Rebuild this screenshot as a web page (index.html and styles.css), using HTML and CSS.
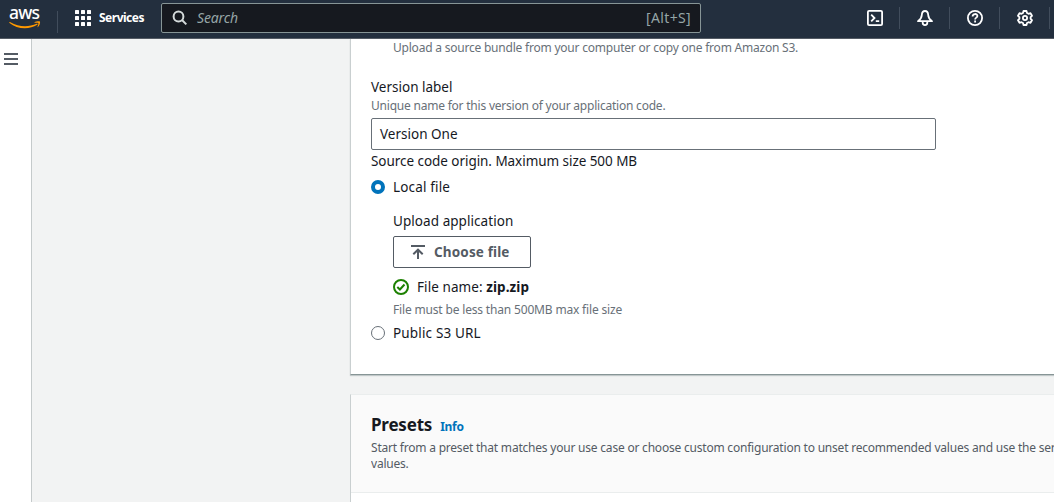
FILE: index.html
```html
<!DOCTYPE html>
<html lang="en">
<head>
<meta charset="utf-8">
<title>Configure environment</title>
<link rel="stylesheet" href="styles.css">
</head>
<body>
<header class="topbar">
  <div class="logo">
    <span class="logo-text">aws</span>
    <svg class="logo-smile" width="32" height="9" viewBox="0 0 32 9"><path d="M.3 1.2C.6.7 1 .9 1.400 1.200 9.600 6 19.500 6.300 27.700 2.700c.8-.3 1.300.4.5 1C20.500 8.700 8.300 8.400.5 1.900.3 1.700.2 1.400.3 1.200Z" fill="#f90"/><path d="M25.500 1.200c1.600-.9 4.900-1.100 5.400-.6.5.6-.1 4-1.900 5.500-.4.3-.7.1-.5-.4.5-1.200 1.200-3.200.8-3.700-.4-.6-2.400-.3-3.500-.2-.5 0-.6-.3-.3-.6Z" fill="#f90"/></svg>
  </div>
  <div class="services">
    <svg width="16" height="16" viewBox="0 0 16 16" fill="#fff"><rect width="4" height="4" rx=".6"/><rect x="6" width="4" height="4" rx=".6"/><rect x="12" width="4" height="4" rx=".6"/><rect y="6" width="4" height="4" rx=".6"/><rect x="6" y="6" width="4" height="4" rx=".6"/><rect x="12" y="6" width="4" height="4" rx=".6"/><rect y="12" width="4" height="4" rx=".6"/><rect x="6" y="12" width="4" height="4" rx=".6"/><rect x="12" y="12" width="4" height="4" rx=".6"/></svg>
    <span class="services-text">Services</span>
  </div>
  <div class="search">
    <svg width="16" height="16" viewBox="0 0 16 16" fill="none" stroke="#d5dbdb" stroke-width="2"><circle cx="6.500" cy="6.500" r="4.900"/><path d="m10 10 4.300 4.400"/></svg>
    <span class="search-text">Search</span>
    <span class="shortcut">[Alt+S]</span>
  </div>
  <nav class="tools">
    <span class="tool"><svg width="16" height="16" viewBox="0 0 16 16" fill="none" stroke="#fff" stroke-width="1.800"><rect x=".9" y=".9" width="14.200" height="14.200" rx="1.200"/><path d="m4.200 4.700 3.300 3.300-3.300 3.300M8.800 11.200h3.400"/></svg></span>
    <span class="tool"><svg width="16" height="16" viewBox="0 0 16 16" fill="none" stroke="#fff" stroke-width="1.800" stroke-linejoin="round"><path d="M8 1C5.700 1 4.900 2.900 4.800 5 4.700 7.300 3.500 9.500 1 11.200h14c-2.500-1.700-3.700-3.900-3.800-6.200C11.100 2.900 10.300 1 8 1Z"/><path d="M5.700 11.500v1.300c0 3 4.600 3 4.600 0v-1.300"/></svg></span>
    <span class="tool"><svg width="16" height="16" viewBox="0 0 16 16" fill="none" stroke="#fff" stroke-width="1.800"><circle cx="8" cy="8" r="7.100"/><path d="M5.600 6.400C5.600 3.300 10.400 3.300 10.400 6c0 1.700-2.300 1.600-2.300 3.500"/><path d="M7.200 11.500H9"/></svg></span>
    <span class="tool"><svg width="16" height="16" viewBox="0 0 16 16" fill="none" stroke="#fff" stroke-width="1.800" stroke-linejoin="round"><path d="M6.500 1h3l.5 2 1.500.8 2-.6 1.500 2.600L13.600 7.200v1.600l1.400 1.400-1.500 2.600-2-.6-1.500.8-.5 2h-3l-.5-2-1.500-.8-2 .6L1 10.200l1.400-1.400V7.200L1 5.800l1.500-2.600 2 .6L6 3Z"/><circle cx="8" cy="8" r="2.100"/></svg></span>
    <span class="tool"></span>
  </nav>
</header>
<div class="page">
  <aside class="rail">
    <svg width="14" height="12" viewBox="0 0 14 12" fill="#545b64"><path d="M0 0h14v2H0zM0 5h14v2H0zM0 10h14v2H0z"/></svg>
  </aside>
  <main class="content">
    <section class="card code-card">
      <p class="hint indent hint-bundle">Upload a source bundle from your computer or copy one from Amazon S3.</p>
      <div class="label">Version label</div>
      <p class="hint">Unique name for this version of your application code.</p>
      <div class="input"><span>Version One</span></div>
      <div class="label source">Source code origin. Maximum size 500 MB</div>
      <div class="option"><span class="radio radio-on"></span><span class="option-text">Local file</span></div>
      <div class="upload">
        <div class="label upload-label">Upload application</div>
        <div class="button">
          <svg width="14" height="14" viewBox="0 0 14 14" fill="none" stroke="#545b64" stroke-width="2"><path d="M0 1h14M7 14V5M2.300 9.200 7 4.700l4.700 4.500"/></svg>
          <span>Choose file</span>
        </div>
        <div class="file">
          <svg width="16" height="16" viewBox="0 0 16 16" fill="none" stroke="#1d8102" stroke-width="2"><circle cx="8" cy="8" r="7"/><path d="m4.300 8 2.600 2.500 4.600-5"/></svg>
          <span>File name: <b>zip.zip</b></span>
        </div>
        <p class="hint limit">File must be less than 500MB max file size</p>
      </div>
      <div class="option"><span class="radio"></span><span class="option-text">Public S3 URL</span></div>
    </section>
    <section class="card presets">
      <div class="presets-head">
        <div class="title-row"><h2 class="title">Presets</h2><a class="info">Info</a></div>
        <p class="presets-text">Start from a preset that matches your use case or choose custom configuration to unset recommended values and use the serv<br>values.</p>
      </div>
    </section>
  </main>
</div>
</body>
</html>
```
FILE: styles.css
```css
* { box-sizing: border-box; }
body {
  margin: 0;
  height: 502px;
  overflow: hidden;
  font-family: "Noto Sans", "Open Sans", sans-serif;
  font-size: 13.5px;
  line-height: 22px;
  color: #16191f;
  background: #f2f3f3;
}
p, h2 { margin: 0; }
svg { display: block; flex: none; }
span, a, b { white-space: nowrap; }

.topbar {
  display: flex;
  align-items: flex-start;
  height: 39px;
  background: #232f3e;
  border-bottom: 1px solid #545b64;
  color: #fff;
}
.logo {
  width: 58px;
  height: 29px;
  margin-top: 7px;
  padding-left: 9px;
  background: linear-gradient(#414d5c, #414d5c) right / 1px 22px no-repeat;
}
.logo-text {
  display: block;
  height: 13px;
  line-height: 11px;
  font-size: 17.5px;
  letter-spacing: -0.8px;
  font-weight: 500;
}
.logo-smile { margin-top: 1px; }
.services {
  display: flex;
  align-items: center;
  gap: 8px;
  width: 103px;
  height: 36px;
  padding-left: 17px;
}
.services-text { font-size: 12px; font-weight: 700; letter-spacing: -0.5px; }
.search {
  display: flex;
  align-items: center;
  width: 540px;
  height: 30px;
  margin-top: 3px;
  padding: 0 9px 0 10px;
  background: #16191f;
  border: 1px solid #879596;
  border-radius: 2px;
  font-size: 14px;
  color: #95a5a6;
}
.search-text { margin-left: 9px; font-style: italic; letter-spacing: -0.15px; }
.shortcut { margin-left: auto; letter-spacing: 0.35px; }
.tools { display: flex; margin-left: 149px; padding-top: 7px; }
.tool {
  display: flex;
  align-items: center;
  justify-content: center;
  width: 50px;
  height: 22px;
  border-right: 1px solid #414d5c;
}
.tool:last-child { width: 4px; border: 0; }

.page { display: flex; height: 463px; }
.rail {
  flex: none;
  width: 32px;
  padding: 14px 0 0 4px;
  background: #fff;
  border-right: 1px solid #c5cacb;
}
.content { flex: 1; min-width: 0; margin-left: 318px; }
.card { background: #fff; border-left: 1px solid #c9cfd0; }
.code-card {
  height: 336px;
  padding: 1px 20px 0;
  border-bottom: 1px solid #879596;
  box-shadow: 0 1px 1px rgba(0, 28, 36, .2);
}
.hint {
  font-size: 12px;
  line-height: 16px;
  letter-spacing: -0.215px;
  color: #687078;
  white-space: nowrap;
}
.limit { letter-spacing: -0.17px; }
.indent { padding-left: 22px; }
.hint-bundle { margin-bottom: 20px; }
.source { letter-spacing: -0.05px; }
.input {
  display: flex;
  align-items: center;
  width: 565px;
  height: 32px;
  margin-top: 4px;
  padding: 0 8px;
  border: 1px solid #687078;
  border-radius: 2px;
}
.option { display: flex; align-items: center; gap: 8px; margin-top: 4px; }
.option-text { letter-spacing: 0.16px; }
.radio {
  width: 14px;
  height: 14px;
  border: 1px solid #687078;
  border-radius: 50%;
}
.radio-on { border: 4px solid #0073bb; }
.upload { padding: 12px 0 0 22px; }
.upload-label { letter-spacing: 0.06px; }
.button {
  display: flex;
  align-items: center;
  width: 138px;
  height: 32px;
  margin-top: 4px;
  padding-left: 17px;
  gap: 9px;
  border: 1px solid #545b64;
  border-radius: 2px;
  color: #545b64;
  font-weight: 700;
  letter-spacing: 0.14px;
}
.file {
  display: flex;
  align-items: center;
  gap: 8px;
  margin: 8px 0 4px;
  letter-spacing: 0.08px;
}

.presets { margin-top: 19px; height: 120px; border-top: 1px solid #eaeded; }
.presets-head {
  height: 98px;
  padding: 19px 0 0 20px;
  background: #fafafa;
  border-bottom: 1px solid #eaeded;
}
.title-row { display: flex; align-items: baseline; gap: 8px; height: 26px; }
.title { font-size: 17px; line-height: 22px; letter-spacing: -0.2px; }
.info { font-size: 12px; font-weight: 700; color: #0073bb; letter-spacing: -0.3px; }
.presets-text {
  overflow: hidden;
  font-size: 12px;
  line-height: 16px;
  letter-spacing: -0.21px;
  color: #545b64;
  white-space: nowrap;
}
```
